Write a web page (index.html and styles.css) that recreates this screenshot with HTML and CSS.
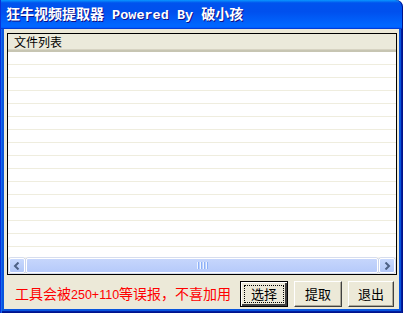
FILE: index.html
```html
<!DOCTYPE html>
<html>
<head>
<meta charset="utf-8">
<link rel="stylesheet" href="styles.css">
</head>
<body>
<div class="window">
  <div class="titlebar">
    <span class="title">狂牛视频提取器<span class="mono"> Powered By </span>破小孩</span>
  </div>
  <div class="frame">
    <div class="body">
      <div class="list">
        <div class="header"><div class="col">文件列表</div><div class="col-rest"></div></div>
        <div class="rows">
          <div class="row"></div><div class="row"></div><div class="row"></div><div class="row"></div>
          <div class="row"></div><div class="row"></div><div class="row"></div><div class="row"></div>
          <div class="row"></div><div class="row"></div><div class="row"></div><div class="row"></div>
          <div class="row"></div><div class="row"></div><div class="row"></div><div class="row"></div>
        </div>
        <div class="hscroll">
          <div class="sbtn">
            <svg width="8" height="8" viewBox="0 0 8 8"><path d="M5.5 0.5 L2 4 L5.5 7.5" fill="none" stroke="#4d6185" stroke-width="2"/></svg>
          </div>
          <div class="thumb"><div class="grip"><i></i><i></i><i></i><i></i></div></div>
          <div class="sbtn">
            <svg width="8" height="8" viewBox="0 0 8 8"><path d="M2.5 0.5 L6 4 L2.5 7.5" fill="none" stroke="#4d6185" stroke-width="2"/></svg>
          </div>
        </div>
      </div>
      <div class="footer">
        <span class="warn">工具会被<span class="lat">250+110</span>等误报，不喜加用</span>
        <button class="btn focus"><span>选择</span></button>
        <button class="btn"><span>提取</span></button>
        <button class="btn"><span>退出</span></button>
      </div>
    </div>
  </div>
</div>
</body>
</html>
```
FILE: styles.css
```css
* { box-sizing: border-box; margin: 0; padding: 0; }
html, body { width: 403px; height: 313px; overflow: hidden; background: #fff; }
.window {
  width: 403px; height: 313px;
  display: flex; flex-direction: column;
}
.titlebar {
  height: 29px; flex: none;
  border-radius: 0 7px 0 0;
  background: linear-gradient(180deg, #0997ff 0%, #0053ee 10%, #0050ee 40%, #0066ff 86%, #0066ff 92%, #005bff 95%, #003dd7 97%, #003dd7 100%);
  box-shadow: inset 1px 0 #0831d9, inset -1px 0 #00138c;
  display: flex; align-items: center;
  padding-left: 6px;
}
.title {
  color: #fff; font-weight: bold; font-size: 14px; line-height: 16px;
  font-family: "Noto Sans CJK SC", sans-serif;
  text-shadow: 1px 1px #0f1089;
  white-space: pre;
}
.mono { font-family: "Liberation Mono", monospace; font-size: 13.5px; }
.frame {
  flex: 1;
  background: #0855dd;
  padding: 0 4px 4px 4px;
  box-shadow: inset 1px 0 #0831d9, inset 2px 0 #166aee, inset -1px 0 #00138c, inset -2px 0 #001ea0, inset 0 -1px #00138c, inset 0 -2px #001ea0;
  display: flex;
}
.body {
  flex: 1;
  background: #ece9d8;
  padding: 4px 2px 0 3px;
  display: flex; flex-direction: column;
}
.list {
  height: 242px; flex: none;
  border: 1px solid #000;
  background: #fff;
  display: flex; flex-direction: column;
}
.header {
  height: 18px; flex: none;
  display: flex;
  background: #ebeadb;
  border-bottom: 2px solid #c7c5b2;
  box-shadow: inset 0 -1px #d6d3c2;
}
.col {
  padding-left: 6px;
  font-family: "Noto Sans CJK SC", sans-serif; font-size: 12px; line-height: 16px; color: #000;
  width: 386px;
}
.rows { flex: 1; overflow: hidden; }
.row { height: 13px; border-bottom: 1px solid #efedde; }
.hscroll {
  height: 17px; flex: none;
  display: flex; gap: 1px;
  background: #f3f1ec;
  padding: 0 1px;
  align-items: center;
}
.sbtn {
  width: 16px; height: 15px; flex: none;
  border: 1px solid #fff;
  border-radius: 2px;
  background: linear-gradient(180deg, #c8d9fd, #b1c6f7);
  box-shadow: 0 0 0 0.5px #b9c9ef;
  display: flex; align-items: center; justify-content: center;
}
.thumb {
  flex: 1; height: 15px;
  border: 1px solid #fff;
  border-radius: 2px;
  background: linear-gradient(180deg, #c6d6fc, #b6cafa);
  box-shadow: 0 0 0 0.5px #b9c9ef;
  display: flex; align-items: center; justify-content: center;
}
.grip { display: flex; gap: 1px; }
.grip i { display: block; width: 1px; height: 7px; background: #eef4fe; box-shadow: 1px 0 #8cb0f8; margin-right: 1px; }
.footer {
  flex: 1;
  display: flex; align-items: center;
  padding-top: 3px;
}
.warn {
  color: #ff0000; font-size: 14px; line-height: 16px;
  font-family: "Noto Sans CJK SC", sans-serif;
  padding-left: 8px;
  width: 233px;
}
.lat { font-family: "Liberation Sans", sans-serif; font-size: 12.5px; }
.btn {
  width: 48px; height: 26px;
  margin-right: 6px;
  background: #ece9d8;
  border: 1px solid;
  border-color: #fff #404040 #404040 #fff;
  box-shadow: inset -1px -1px #aca899;
  font-family: "Noto Sans CJK SC", sans-serif; font-size: 13px; color: #000;
  display: flex; align-items: center; justify-content: center;
}
.btn:last-child { margin-right: 0; width: 46px; }
.btn span { line-height: 16px; }
.focus { border-color: #000; box-shadow: inset 1px 1px #fff, inset -2px -2px #404040; position: relative; }
.focus::after {
  content: ""; position: absolute; left: 3px; top: 3px; right: 3px; bottom: 3px;
  border: 1px dotted #000;
}
```
